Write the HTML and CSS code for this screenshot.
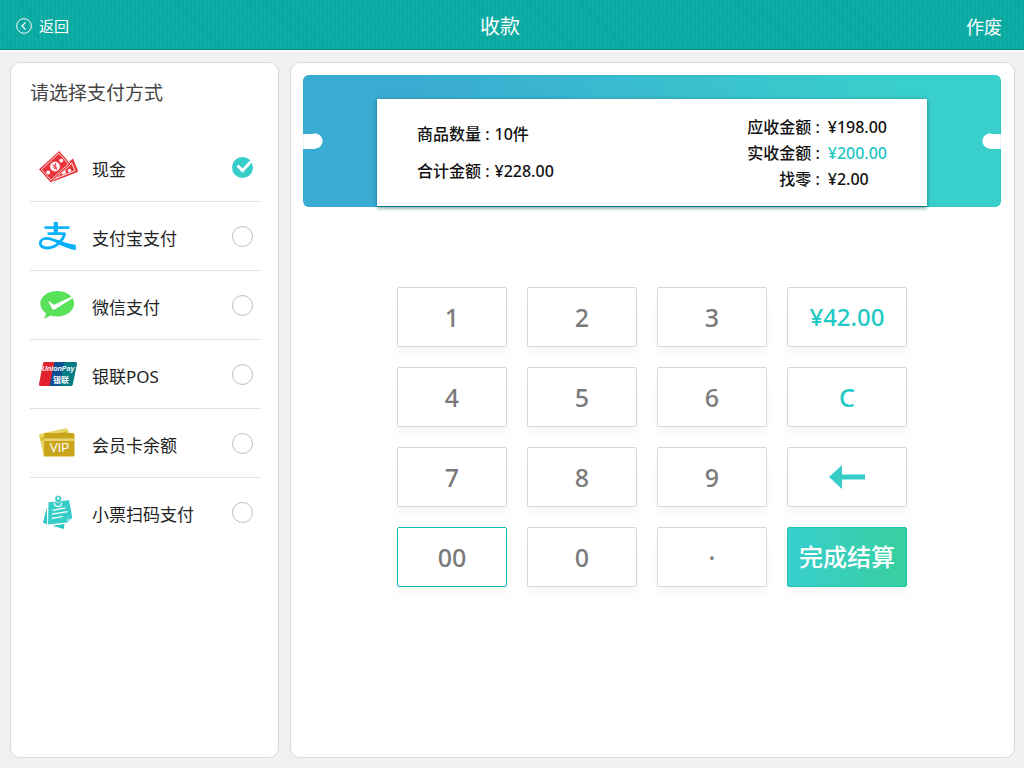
FILE: index.html
```html
<!DOCTYPE html>
<html lang="zh-CN">

<head>
    <meta charset="UTF-8">
    <meta name="viewport" content="width=device-width, initial-scale=1.0">
    <title>收款</title>
    <link rel="stylesheet" href="styles.css">
</head>

<body>
    <header class="topbar">
        <a href="#" class="back">
            <svg width="16" height="16" viewBox="0 0 16 16" fill="none" stroke="#fff">
                <circle cx="8" cy="8" r="7.3" />
                <path d="M9.6 4.4L6 8l3.6 3.6" stroke-width="1.3" />
            </svg>
            返回
        </a>
        <h1 class="title">收款</h1>
        <a href="#" class="void">作废</a>
    </header>

    <main class="container">
        <form class="panel methods">
            <h2>请选择支付方式</h2>
            <ul>
                <li>
                    <label class="method">
                        <svg class="icon" viewBox="0 0 40 36">
                            <path d="M32 12l3-2.500 5 12.200-.8 1.500-26 10-1.200-1z" fill="#e8333a" />
                            <path d="M33.500 13.500l3.500 8.200-19.500 8" fill="none" stroke="#fff" stroke-width=".9" />
                            <circle cx="31.500" cy="21.500" r="1.700" fill="#fff" />
                            <path d="M24 23.500l3.500-2.500.3 3.500-3.500 1.300z" fill="#fff" />
                            <path d="M21.300 1.600L33 15.200 12.700 33.800.7 20.300z" fill="#e8333a" stroke="#fff" stroke-width=".8" />
                            <path d="M21 4.200L30.300 15 12.900 31 3.500 20.500z" fill="none" stroke="#fff" stroke-width=".8" />
                            <circle cx="17" cy="17.600" r="4.900" fill="#fff" />
                            <circle cx="23.200" cy="11.600" r="1.900" fill="#fff" />
                            <circle cx="10.200" cy="23.500" r="1.900" fill="#fff" />
                            <path d="M14.300 15.800l2.700 1.200.8-2.900M17 17l1.700 3.800M15.200 18.600l3.400-1.500M15.900 20.200l3.400-1.500" fill="none" stroke="#e8333a" stroke-width="1" />
                        </svg>
                        <span>现金</span>
                        <input type="radio" name="method" checked>
                    </label>
                </li>
                <li>
                    <label class="method">
                        <svg class="icon" viewBox="0 0 40 36" fill="none" stroke="#06b0fb">
                            <path d="M17.800 4v11" stroke-width="4.200" />
                            <path d="M6.500 9.600h25" stroke-width="2.600" />
                            <path d="M9.500 15.600h17.800" stroke-width="2.600" />
                            <path d="M27 15.500C24.500 23 18 30 9.500 30 4.500 30 2.300 27.800 2.300 25.200c0-2.700 2.700-4.800 6.400-4.800 5.300 0 10.500 3.200 16.300 6" stroke-width="2.800" />
                            <path d="M19 21.600c5 2.600 12.500 4.600 18.800 5.100v5.600c-7-1.400-14-4.400-19.200-7.300z" fill="#06b0fb" stroke="none" />
                        </svg>
                        <span>支付宝支付</span>
                        <input type="radio" name="method">
                    </label>
                </li>
                <li>
                    <label class="method">
                        <svg class="icon" viewBox="0 0 40 36">
                            <path d="M19.200 4C9.800 4 2.300 9.500 2.300 16.600c0 4 2.300 7.300 5.700 9.600L6.300 32l6.200-3.400c2 .6 4.300.9 6.700.9 9.400 0 16.900-5.600 16.900-12.900 0-2-.6-3.800-1.600-5.500C31.800 6.800 26 4 19.200 4z" fill="#5ae15a" />
                            <path d="M10.200 14.300c1.700.3 3 1.300 4.700 2.900.8.500 1.600.4 2.500 0L35.500 8.800l.6 1.500-19.300 12.100c-1.200.7-2.200.4-2.900-.8z" fill="#fff" />
                        </svg>
                        <span>微信支付</span>
                        <input type="radio" name="method">
                    </label>
                </li>
                <li>
                    <label class="method">
                        <svg class="icon" viewBox="0 0 40 36">
                            <path d="M6.500 6H18l-5 24H2.500c-1.300 0-1.800-.8-1.500-2L5 7.500C5.200 6.500 5.700 6 6.500 6z" fill="#e2232e" />
                            <path d="M16.500 6H28l-5 24H11.500z" fill="#0c4f92" />
                            <path d="M26.500 6h11c1.200 0 1.700.8 1.500 2l-4.200 20.400c-.3 1.100-.9 1.600-2 1.600H21.500z" fill="#047c86" />
                            <text class="union-name" x="4" y="15">UnionPay</text>
                            <text class="union-cn" x="15" y="27">银联</text>
                        </svg>
                        <span>银联POS</span>
                        <input type="radio" name="method">
                    </label>
                </li>
                <li>
                    <label class="method">
                        <svg class="icon" viewBox="0 0 40 36">
                            <path d="M2.500 8.700L27.700 3.200c1-.2 1.600.1 1.900 1.100L31 10 8 31.500l-2.300-.3L1.200 10.600c-.2-1 .2-1.600 1.300-1.900z" fill="#e6d568" />
                            <path d="M1.600 12.400l28.500-6.300.6 3.200-28 6.800z" fill="#d9c02f" />
                            <rect x="6" y="8" width="30.500" height="23.500" rx="1.500" fill="#c9a51c" />
                            <path d="M6 13.500h30.500v2.400H6z" fill="#e9d878" />
                            <text class="vip" x="21.500" y="27" text-anchor="middle">VIP</text>
                        </svg>
                        <span>会员卡余额</span>
                        <input type="radio" name="method">
                    </label>
                </li>
                <li>
                    <label class="method">
                        <svg class="icon" viewBox="0 0 40 36">
                            <path d="M8.800 13.500L9.200 30.500 5 28.500zM14.500 31.700l12-1.700-.7 5z" fill="#2cc6c2" />
                            <path d="M10.500 8.300l20.600-2.100L34.300 24 29 28.600l-19 1.900z" fill="#36ccc8" />
                            <path d="M34.300 24l-5.300 4.600-.3-3.700z" fill="#8ae4e1" />
                            <circle cx="20.200" cy="5" r="3.400" fill="#2cc6c2" stroke="#fff" stroke-width=".7" />
                            <circle cx="20.200" cy="4.500" r="1.300" fill="#fff" />
                            <path d="M16.300 8.500c0 5.500 7.300 5.300 7.300.2" fill="none" stroke="#fff" stroke-width="1.200" />
                            <path d="M14.500 16.300l13-2.500M14 20.200l15.500-2.500M13.700 24.300l11.300-1.800" stroke="#fff" stroke-width="1.200" />
                        </svg>
                        <span>小票扫码支付</span>
                        <input type="radio" name="method">
                    </label>
                </li>
            </ul>
        </form>

        <section class="panel checkout">
            <div class="ticket">
                <div class="summary">
                    <dl class="goods">
                        <dt>商品数量 :</dt>
                        <dd>10件</dd>
                        <dt>合计金额 :</dt>
                        <dd>¥228.00</dd>
                    </dl>
                    <dl class="amounts">
                        <dt>应收金额 :</dt>
                        <dd>¥198.00</dd>
                        <dt>实收金额 :</dt>
                        <dd class="paid">¥200.00</dd>
                        <dt>找零 :</dt>
                        <dd>¥2.00</dd>
                    </dl>
                </div>
            </div>

            <div class="keypad">
                <button type="button">1</button>
                <button type="button">2</button>
                <button type="button">3</button>
                <button type="button" class="action amount">¥42.00</button>
                <button type="button">4</button>
                <button type="button">5</button>
                <button type="button">6</button>
                <button type="button" class="action">C</button>
                <button type="button">7</button>
                <button type="button">8</button>
                <button type="button">9</button>
                <button type="button" class="action" aria-label="退格">
                    <svg width="36" height="24" viewBox="0 0 36 24">
                        <path d="M0 12L13 0v9.500h23v5H13V24z" fill="#36cdc9" />
                    </svg>
                </button>
                <button type="button" class="active">00</button>
                <button type="button">0</button>
                <button type="button">·</button>
                <button type="button" class="finish">完成结算</button>
            </div>
        </section>
    </main>
</body>

</html>
```
FILE: styles.css
```css
* {
    box-sizing: border-box;
}

body {
    margin: 0;
    min-height: 100vh;
    display: flex;
    flex-direction: column;
    background-color: #f1f1f1;
    color: #222;
    font-family: "Noto Sans", "Noto Sans CJK SC", sans-serif;
}

h1,
h2,
ul,
dl,
dd {
    margin: 0;
    padding: 0;
}

h1,
h2 {
    font-weight: normal;
}

/* top bar */
.topbar {
    height: 50px;
    display: grid;
    grid-template-columns: 1fr auto 1fr;
    align-items: center;
    padding: 2px 22px 0 16px;
    border-bottom: 1px solid #079488;
    background-color: #0aaca4;
    background-image:
        repeating-linear-gradient(45deg, rgba(0, 90, 90, .1) 0 1px, transparent 1px 3px),
        repeating-linear-gradient(90deg, rgba(255, 255, 255, .05) 0 1px, transparent 1px 4px);
    box-shadow: 0 2px 0 #fafafa;
    color: #fff;
}

.topbar a {
    color: #fff;
    text-decoration: none;
}

.topbar .back {
    display: flex;
    align-items: center;
    gap: 7px;
    font-size: 15px;
}

.topbar .title {
    padding-right: 18px;
    font-size: 20px;
}

.topbar .void {
    justify-self: end;
    font-size: 18px;
}

/* panels */
.container {
    flex: 1;
    display: flex;
    gap: 11px;
    padding: 12px 9px 10px 10px;
}

.panel {
    border: 1px solid #dadada;
    border-radius: 10px;
    background-color: #fff;
}

.methods {
    flex: 0 0 269px;
    padding: 14px 17px 14px 19px;
}

.methods h2 {
    margin-bottom: 24px;
    font-size: 19px;
    line-height: 32px;
    color: #444;
}

.methods li {
    list-style: none;
    border-bottom: 1px solid #e3e3e3;
}

.methods li:last-child {
    border-bottom: none;
}

.method {
    height: 68px;
    display: flex;
    align-items: center;
    gap: 14px;
    padding: 0 8px;
    font-size: 17px;
    cursor: pointer;
}

.method span {
    flex: 1;
    padding-top: 2px;
}

.icon {
    width: 40px;
    height: 36px;
    flex: none;
}

.union-name {
    fill: #fff;
    font: italic bold 7px "Liberation Sans", sans-serif;
}

.union-cn {
    fill: #fff;
    font: bold 8px "Noto Sans CJK SC", sans-serif;
}

.vip {
    fill: #fff;
    font: 12px "Liberation Sans", sans-serif;
}

.method input {
    appearance: none;
    width: 21px;
    height: 21px;
    margin: 0;
    border: 1px solid #bbb;
    border-radius: 50%;
}

.method input:checked {
    border: none;
    background: #36cdc9 url("data:image/svg+xml,%3Csvg xmlns='http://www.w3.org/2000/svg' viewBox='0 0 21 21'%3E%3Cpath d='M5.500 8.500l5 5 8.500-9' fill='none' stroke='white' stroke-width='3'/%3E%3C/svg%3E");
}

/* ticket */
.checkout {
    flex: 1;
    padding: 12px 13px 12px 12px;
}

.ticket {
    padding: 24px 74px 0;
    border-radius: 6px;
    background-image:
        radial-gradient(circle at 12px 50%, #fff 7px, transparent 8px),
        linear-gradient(#fff, #fff),
        radial-gradient(circle at calc(100% - 11px) 50%, #fff 7px, transparent 8px),
        linear-gradient(#fff, #fff),
        linear-gradient(90deg, #3aabd2 15%, #39cfcb 85%);
    background-size: auto, 12px 15px, auto, 11px 15px, auto;
    background-position: 0 0, left center, 0 0, right center, 0 0;
    background-repeat: no-repeat;
    box-shadow: inset 0 0 1px #0a9fb5;
}

.summary {
    display: flex;
    justify-content: space-between;
    align-items: center;
    min-height: 108px;
    padding: 0 40px;
    border-bottom: 1px solid #067c88;
    background-color: #fff;
    box-shadow: 0 1px 4px rgba(0, 70, 80, .6);
    font-size: 16px;
    font-weight: 500;
    color: #111;
}

.goods,
.amounts {
    display: grid;
    grid-template-columns: auto auto;
}

.goods {
    column-gap: 5px;
    line-height: 37px;
}

.amounts {
    column-gap: 8px;
    line-height: 26px;
}

.amounts dt {
    text-align: right;
}

.paid {
    color: #1cc7c1;
}

/* keypad */
.keypad {
    display: grid;
    grid-template-columns: repeat(3, 110px) 120px;
    grid-auto-rows: 60px;
    gap: 20px;
    justify-content: center;
    margin-top: 80px;
}

.keypad button {
    display: flex;
    align-items: center;
    justify-content: center;
    padding: 0;
    border: 1px solid #d8d8d8;
    border-radius: 2px;
    background-color: #fff;
    box-shadow: 0 8px 10px rgba(0, 0, 0, .03);
    font-family: inherit;
    font-size: 25px;
    font-weight: 500;
    line-height: 32px;
    color: #7a7a7a;
    cursor: pointer;
}

.keypad .action {
    color: #20c9c3;
}

.keypad .amount {
    font-size: 24px;
}

.keypad .active {
    border-color: #10bab2;
}

.keypad .finish {
    border-color: #22c5a8;
    background-image: linear-gradient(90deg, #38cfcf, #38cf9f);
    font-size: 24px;
    color: #fff;
}
```
